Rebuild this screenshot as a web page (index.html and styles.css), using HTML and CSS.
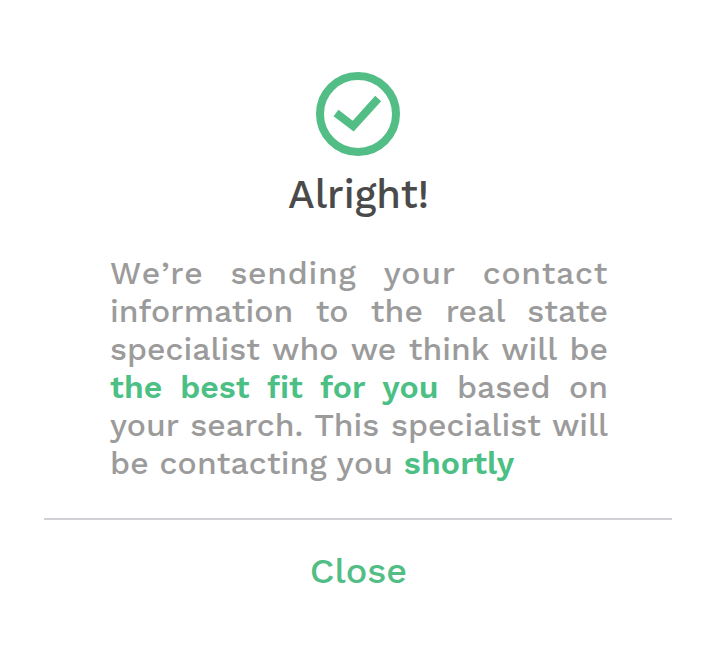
FILE: index.html
```html
<!DOCTYPE html>
<html lang="en">
<head>
<meta charset="utf-8">
<title>Alright!</title>
<link rel="stylesheet" href="styles.css">
</head>
<body>
<main class="dialog">
  <svg class="icon" viewBox="0 0 84 84" aria-hidden="true">
    <circle cx="42" cy="42" r="38"/>
    <path d="M20 41 37.200 54.200 62.200 26.500"/>
  </svg>
  <h1 class="title">Alright!</h1>
  <div class="message">
    <p class="line l1">We’re sending your contact</p>
    <p class="line l2">information to the real state</p>
    <p class="line l3">specialist who we think will be</p>
    <p class="line l4"><strong class="strong">the best fit for you</strong> based on</p>
    <p class="line l5">your search. This specialist will</p>
    <p class="line l6">be contacting you <strong class="strong">shortly</strong></p>
  </div>
  <button class="close" type="button">Close</button>
</main>
</body>
</html>
```
FILE: styles.css
```css
* { box-sizing: border-box; }
body { margin: 0; background: #fff; font-family: "Work Sans", Inter, sans-serif; }
.dialog { height: 648px; padding: 72px 44px 0; display: flex; flex-direction: column; align-items: center; }
.icon { width: 84px; height: 84px; fill: none; stroke: #53bd86; stroke-width: 8; }
.title { margin: 15px 0 0 1px; font-size: 40px; line-height: 48px; font-weight: 500; color: #4a4a4a; }
.message { width: 498px; margin: 35px 0 0 2px; color: #9b9b9b; font-size: 32px; font-weight: 500; }
.line { margin: 0; height: 38px; line-height: 38px; white-space: nowrap; text-align: justify; text-align-last: justify; }
.l1 { letter-spacing: 0.7px; font-kerning: none; }
.l2 { letter-spacing: 0.08px; }
.l6 { text-align: left; text-align-last: left; letter-spacing: 0.15px; }
.strong { color: #4bbf84; font-weight: 600; }
.close { width: 100%; margin-top: 36px; padding: 27px 0 0 1px; border: 0; border-top: 2px solid #d0d0d5; background: none; font: 500 36px/48px "Work Sans", Inter, sans-serif; color: #53bd86; }
```
